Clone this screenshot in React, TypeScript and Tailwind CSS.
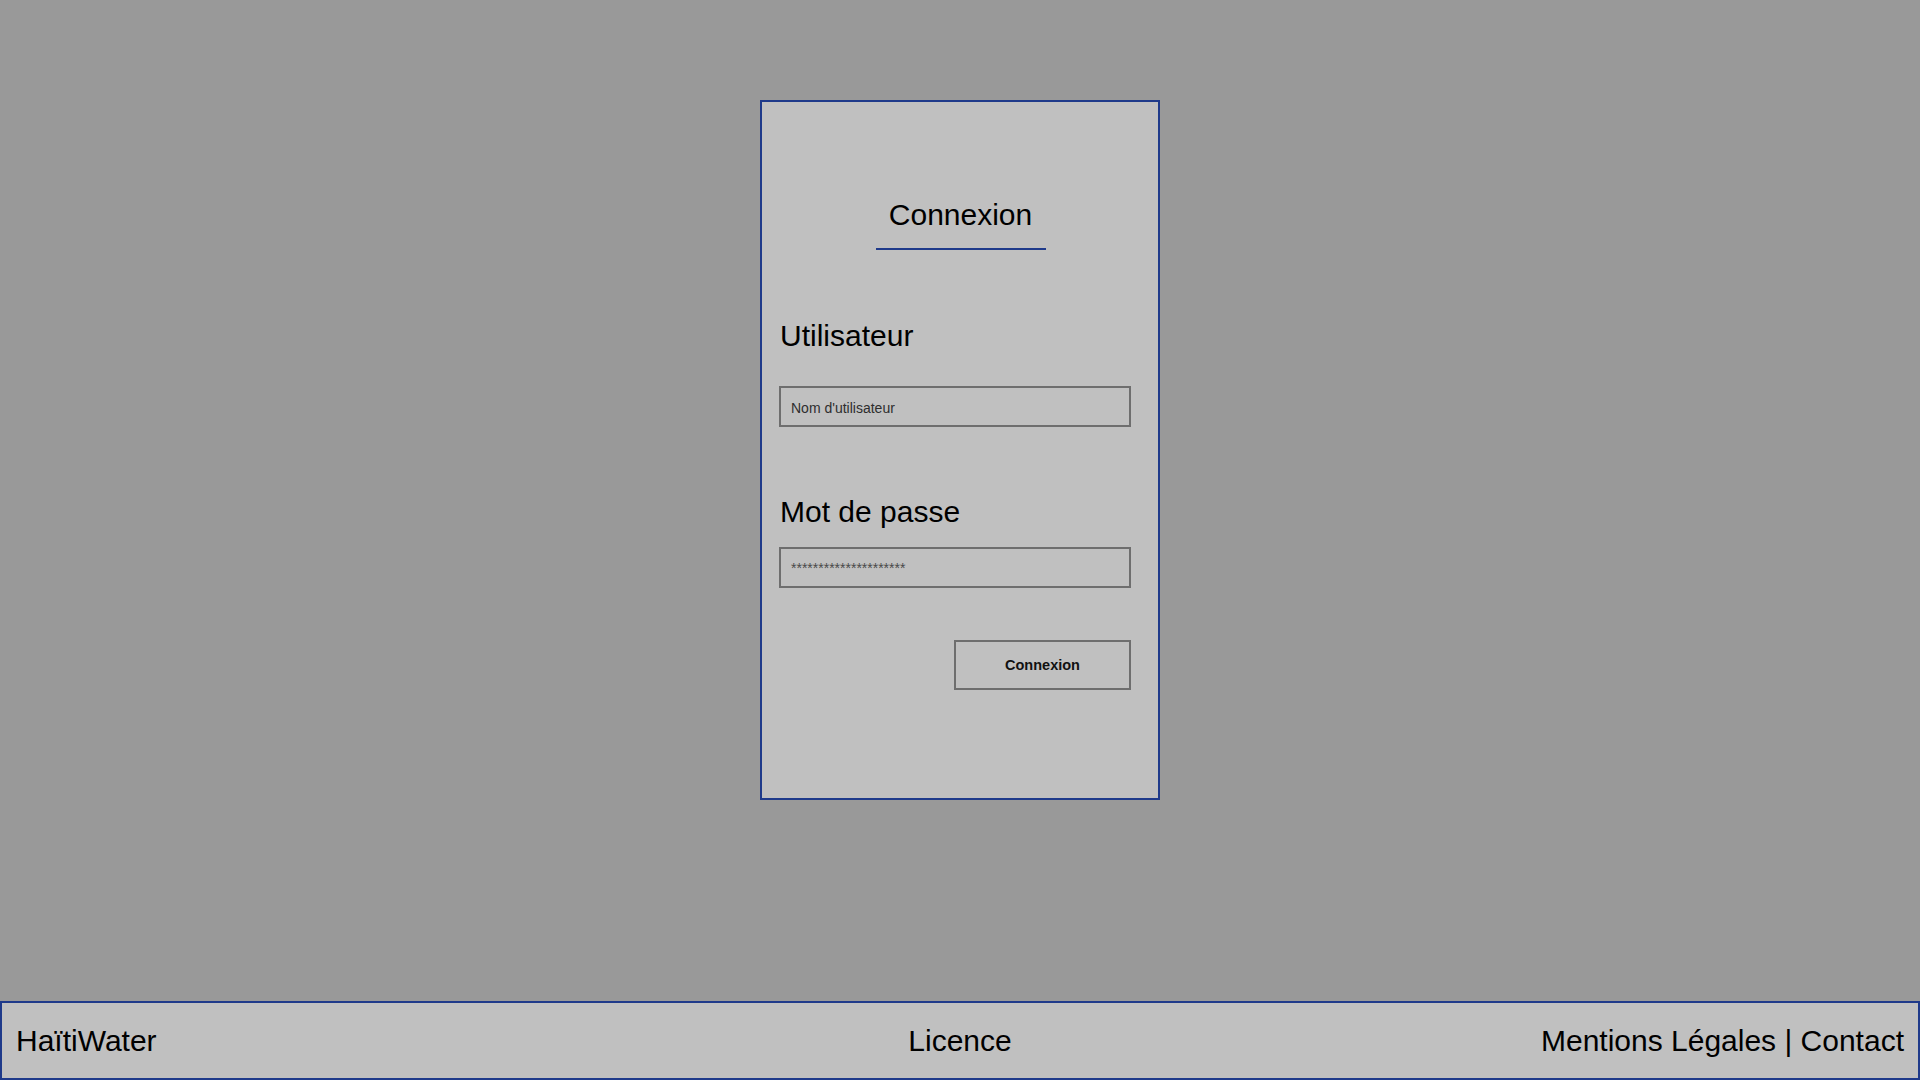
import React from "react";

export default function App() {
  return (
    <div
      className="flex h-screen w-full flex-col bg-[#999999] text-black"
      style={{ fontFamily: '"Liberation Sans", Arial, sans-serif' }}
    >
      <main className="flex-1">
        <div className="mx-auto mt-[100px] box-border flex h-[700px] w-[400px] flex-col border-2 border-[#1f3a8a] bg-[#c0c0c0] pl-[18px] pr-[26px]">
          <div className="mt-[96px] flex flex-col items-center pl-[9px]">
            <h1 className="text-[30px] leading-[34px] font-normal">Connexion</h1>
            <div className="mt-[16px] h-[2px] w-[170px] bg-[#1f3a8a]" />
          </div>

          <label className="mt-[69px] text-[30px] leading-[34px]">Utilisateur</label>
          <input
            type="text"
            placeholder="Nom d'utilisateur"
            className="-ml-px mt-[33px] box-border h-[41px] w-[352px] border-2 border-[#6e6e6e] bg-transparent pl-[10px] pt-[2px] text-[14px] outline-none placeholder:text-[#2e2e2e]"
          />

          <label className="mt-[68px] text-[30px] leading-[34px]">Mot de passe</label>
          <input
            type="password"
            placeholder="*********************"
            className="-ml-px mt-[18px] box-border h-[41px] w-[352px] border-2 border-[#6e6e6e] bg-transparent pl-[10px] pt-[1px] text-[14px] outline-none placeholder:text-[#4a4a4a]"
          />

          <div className="-ml-px mt-[52px] flex w-[352px] justify-end">
            <button className="box-border h-[50px] w-[177px] border-2 border-[#6e6e6e] bg-transparent pt-[2px] text-[14.5px] font-bold text-[#111]">
              Connexion
            </button>
          </div>
        </div>
      </main>

      <footer className="box-border grid h-[79px] grid-cols-3 items-center border-2 border-[#1f3a8a] bg-[#c0c0c0] pl-[14px] pr-[14px] text-[30px] leading-[34px]">
        <span>HaïtiWater</span>
        <span className="text-center">Licence</span>
        <span className="text-right">Mentions Légales | Contact</span>
      </footer>
    </div>
  );
}
